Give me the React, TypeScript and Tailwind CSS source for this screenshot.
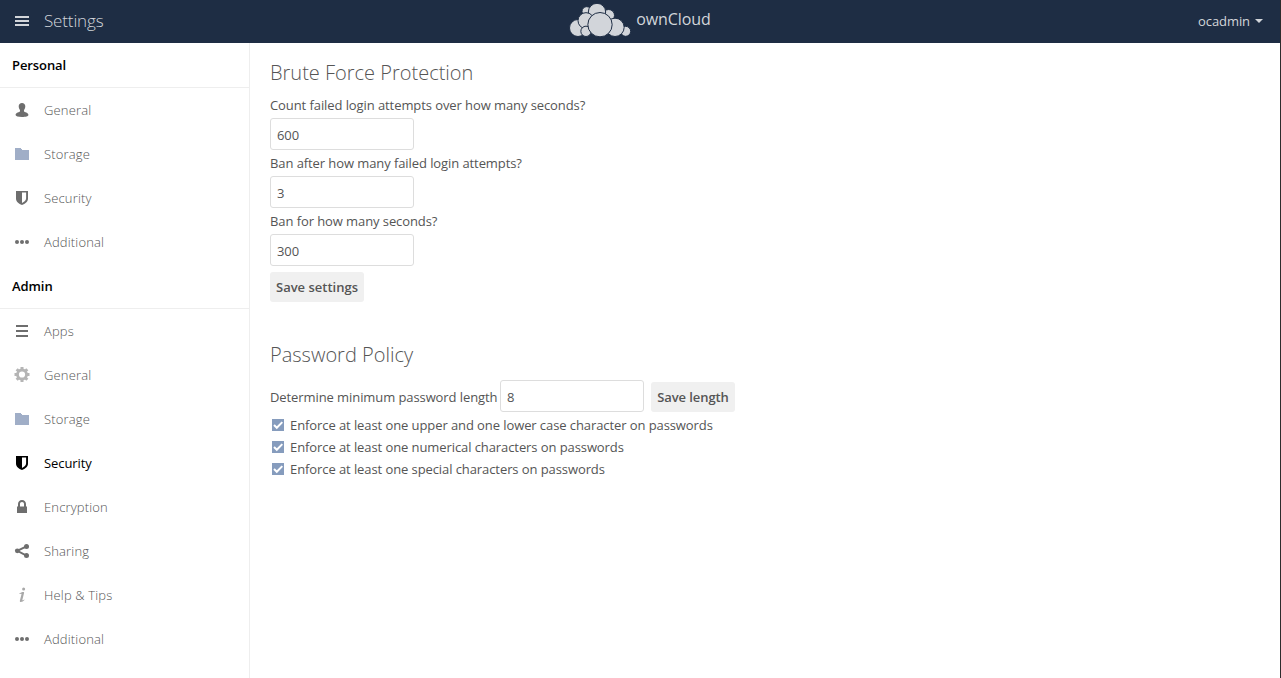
import React from "react";

type IconProps = { children: React.ReactNode; className?: string };

function Icon({ children, className = "text-[#6e6e6e]" }: IconProps) {
  return (
    <svg viewBox="0 0 16 16" className={`block size-4 shrink-0 ${className}`} fill="currentColor">
      {children}
    </svg>
  );
}

const UserIcon = () => (
  <Icon>
    <path d="M8 1C6 1 4.700 2.300 4.700 4.300c0 1.500.5 2.500 1.100 3.400.4.7.3 1.800-.2 2.100C4.400 10.400 1.600 10.900 1.600 13c0 1.300 2.600 2 6.400 2s6.400-.7 6.400-2c0-2.100-2.800-2.600-4-3.200-.5-.3-.6-1.400-.2-2.100.6-.9 1.100-1.900 1.100-3.400C11.300 2.300 10 1 8 1z" />
  </Icon>
);
const FolderIcon = () => (
  <Icon className="text-[#a0aec7]">
    <path d="M1 2h6v1h1v1h7v10H1z" />
  </Icon>
);
const ShieldIcon = ({ active = false }: { active?: boolean }) => (
  <Icon className={active ? "text-black" : "text-[#6e6e6e]"}>
    <path fillRule="evenodd" d="M2 1h12v7.500c0 3.200-2.800 5.300-6 6.500-3.200-1.200-6-3.300-6-6.500zM8 2.500v10.400c2.300-1.100 4.100-2.500 4.100-4.700V2.500z" />
  </Icon>
);
const MoreIcon = () => (
  <Icon>
    <circle cx="3" cy="8" r="2" />
    <circle cx="8" cy="8" r="2" />
    <circle cx="13" cy="8" r="2" />
  </Icon>
);
const AppsIcon = () => (
  <Icon>
    <path d="M2 2h12v2H2zM2 7h12v2H2zM2 12h12v2H2z" />
  </Icon>
);
const GearIcon = () => (
  <Icon className="text-[#b5b5b5]">
    <circle cx="8" cy="7.500" r="4.500" fill="none" stroke="currentColor" strokeWidth="2.800" />
    <g stroke="currentColor" strokeWidth="3">
      <path d="M8 0v2.500M8 12.500V15M.5 7.500H3M13 7.500h2.500M2.700 2.200l1.800 1.800M11.500 11l1.800 1.800M2.700 12.800 4.500 11M11.500 4l1.800-1.800" />
    </g>
  </Icon>
);
const LockIcon = () => (
  <Icon>
    <path fillRule="evenodd" d="M8 1C5.500 1 4 2.800 4 5v2.500H3V14h10V7.500h-1V5c0-2.200-1.500-4-4-4zm0 2c1.300 0 2 .9 2 2.100v2.400H6V5.100C6 3.900 6.700 3 8 3z" />
  </Icon>
);
const ShareIcon = () => (
  <Icon>
    <path d="M12.500 3.300 3.300 7.800l9.200 4.900" fill="none" stroke="currentColor" strokeWidth="1.900" />
    <circle cx="12.500" cy="3.400" r="2.500" />
    <circle cx="3.300" cy="7.800" r="2.400" />
    <circle cx="12.500" cy="12.500" r="2.500" />
  </Icon>
);
const InfoIcon = () => (
  <Icon className="text-[#a8a8a8]">
    <circle cx="9.600" cy="1.900" r="1.500" />
    <path d="M5.400 6.300C6.500 5.600 8 4.900 9.300 4.900c.8 0 .9.6.7 1.400L8.400 12.800c-.1.500.2.600.6.400l1.300-.8.2.6c-1.100 1.100-2.400 2-3.700 2-.9 0-1.100-.7-.9-1.500l1.600-6.200c.1-.6-.1-.8-.5-.6l-1.400.4z" />
  </Icon>
);

function CloudLogo() {
  return (
    <svg viewBox="0 0 186 114" className="block h-[38px] w-[62px] shrink-0" fill="#d2d5da" stroke="#1e2d44" strokeWidth="3">
      <circle cx="53" cy="34" r="14" />
      <circle cx="119" cy="46" r="17.500" />
      <circle cx="84" cy="36" r="26" />
      <circle cx="27" cy="84" r="25.500" />
      <circle cx="51" cy="62" r="24" />
      <circle cx="51" cy="94" r="15.500" />
      <circle cx="170" cy="94" r="15" />
      <circle cx="138" cy="82" r="27.500" />
      <circle cx="93" cy="74" r="36.500" />
    </svg>
  );
}

function NavItem({ icon, label, active = false }: { icon: React.ReactNode; label: string; active?: boolean }) {
  return (
    <li className="flex h-11 items-center gap-[14px] pl-[14px]">
      {icon}
      <span className={active ? "text-black" : "font-light tracking-[0.15px] text-[#555]"}>{label}</span>
    </li>
  );
}

function NavHeading({ children }: { children: React.ReactNode }) {
  return <h2 className="flex h-[45px] items-center border-b border-[#eee] pl-3 font-semibold text-black">{children}</h2>;
}

function NumberField({ label, value }: { label: string; value: string }) {
  return (
    <label className="flex h-[58px] flex-col">
      <span className="flex h-[22px] items-center">{label}</span>
      <input
        defaultValue={value}
        className="mt-0.5 h-8 w-36 rounded-[3px] border border-[#ddd] bg-white px-1.5 pt-0.5 text-[#555] outline-none"
      />
    </label>
  );
}

function Policy({ label }: { label: string }) {
  return (
    <li className="flex h-[22px] items-center gap-1.5 pl-0.5">
      <svg viewBox="0 0 12 12" className="mb-px block size-3 shrink-0">
        <path d="M0 0h12v12H0z" fill="#869cbd" />
        <path d="m2 6 2.800 2.800L10.300 3.100" fill="none" stroke="white" strokeWidth="2" />
      </svg>
      <span>{label}</span>
    </li>
  );
}

const buttonClass = "h-[30px] rounded-[3px] bg-[#f0f0f0] font-semibold text-[#555]";

export default function App() {
  return (
    <div className="flex h-[678px] w-[1281px] border-r border-[#2c2c2c] bg-white font-['Open_Sans',sans-serif] text-[13px] leading-5 tracking-[-0.085px] text-[#555]">
      <div className="flex min-w-0 flex-1 flex-col">
        <header className="grid h-[43px] shrink-0 grid-cols-3 items-center bg-[#1e2d44] text-[#d2d5da]">
          <div className="flex items-center pl-[14px]">
            <Icon className="text-[#d2d5da]">
              <path d="M1 2h14v2H1zM1 6h14v2H1zM1 10h14v2H1z" />
            </Icon>
            <span className="mb-0.5 ml-[14px] text-[17px] font-light tracking-[-0.15px]">Settings</span>
          </div>
          <div className="flex h-[43px] items-start justify-center gap-[5px]">
            <CloudLogo />
            <span className="pt-[9px] text-[16px] leading-5">ownCloud</span>
          </div>
          <div className="mb-0.5 flex items-center justify-end gap-[5px] pr-[17px]">
            <span>ocadmin</span>
            <svg viewBox="0 0 8 4" className="block h-1 w-2" fill="currentColor"><path d="M0 0h8L4 4z" /></svg>
          </div>
        </header>
        <div className="flex min-h-0 flex-1">
          <nav className="w-[250px] shrink-0 border-r border-[#eee]">
            <NavHeading>Personal</NavHeading>
            <ul>
              <NavItem icon={<UserIcon />} label="General" />
              <NavItem icon={<FolderIcon />} label="Storage" />
              <NavItem icon={<ShieldIcon />} label="Security" />
              <NavItem icon={<MoreIcon />} label="Additional" />
            </ul>
            <NavHeading>Admin</NavHeading>
            <ul>
              <NavItem icon={<AppsIcon />} label="Apps" />
              <NavItem icon={<GearIcon />} label="General" />
              <NavItem icon={<FolderIcon />} label="Storage" />
              <NavItem icon={<ShieldIcon active />} label="Security" active />
              <NavItem icon={<LockIcon />} label="Encryption" />
              <NavItem icon={<ShareIcon />} label="Sharing" />
              <NavItem icon={<InfoIcon />} label="Help & Tips" />
              <NavItem icon={<MoreIcon />} label="Additional" />
            </ul>
          </nav>
          <main className="flex-1 pl-5">
            <section className="flex flex-col items-start pt-[17px]">
              <h2 className="mb-[9px] text-[20px] font-light leading-[25px] tracking-normal">Brute Force Protection</h2>
              <NumberField label="Count failed login attempts over how many seconds?" value="600" />
              <NumberField label="Ban after how many failed login attempts?" value="3" />
              <NumberField label="Ban for how many seconds?" value="300" />
              <button className={`mt-1 w-[94px] tracking-normal ${buttonClass}`}>Save settings</button>
            </section>
            <section className="pt-10">
              <h2 className="text-[20px] font-light leading-[25px] tracking-normal">Password Policy</h2>
              <div className="mt-[13px] flex h-8 items-center">
                <label className="flex items-center">
                  <span className="w-[230px] pt-0.5">Determine minimum password length</span>
                  <input
                    defaultValue="8"
                    className="h-8 w-36 rounded-[3px] border border-[#ddd] bg-white px-1.5 pt-0.5 text-[#555] outline-none"
                  />
                </label>
                <button className={`mt-0.5 ml-[7px] w-[84px] ${buttonClass}`}>Save length</button>
              </div>
              <ul className="mt-0.5">
                <Policy label="Enforce at least one upper and one lower case character on passwords" />
                <Policy label="Enforce at least one numerical characters on passwords" />
                <Policy label="Enforce at least one special characters on passwords" />
              </ul>
            </section>
          </main>
        </div>
      </div>
    </div>
  );
}
